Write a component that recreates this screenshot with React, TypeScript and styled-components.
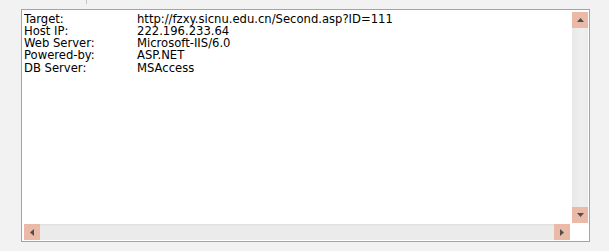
import React from "react";
import styled, { createGlobalStyle } from "styled-components";

const Global = createGlobalStyle`
  html, body { margin: 0; padding: 0; background: #f2f2f2; }
  #root { width: 609px; height: 251px; overflow: hidden; }
`;

const Page = styled.div`
  width: 609px;
  height: 251px;
  box-sizing: border-box;
  padding: 0 20px 0 21px;
  display: flex;
  flex-direction: column;
`;

const TabStrip = styled.div`
  height: 9px;
  display: flex;
  align-items: flex-start;
`;

const TabDivider = styled.div`
  margin-left: 65px;
  width: 1px;
  height: 4px;
  background: #c4c4c4;
`;

const Box = styled.div`
  width: 569px;
  height: 233px;
  box-sizing: border-box;
  border: 1px solid #a3a3a3;
  background: #ffffff;
  padding: 2px 1px 1px 2px;
  display: grid;
  grid-template-columns: 1fr 16px;
  grid-template-rows: 1fr 17px;
`;

const Content = styled.div`
  padding-top: 0.5px;
  display: grid;
  grid-template-columns: 113px auto;
  align-content: start;
  font-family: "DejaVu Sans", Verdana, sans-serif;
  font-size: 11.6px;
  line-height: 12.25px;
  color: #000;
  overflow: hidden;
`;

const Cell = styled.div`
  white-space: nowrap;
`;

const VScroll = styled.div`
  display: flex;
  flex-direction: column;
  background: linear-gradient(to right, #e8e8e8, #efefef 60%, #ebebeb);
  height: 211px;
`;

const HScroll = styled.div`
  display: flex;
  background: linear-gradient(to bottom, #e2e2e2 0, #e2e2e2 1px, #ebebeb 2px);
  height: 16px;
  margin-top: 1px;
  width: 546px;
`;

const Track = styled.div`
  flex: 1;
`;

const Btn = styled.div<{ $w: number; $h: number }>`
  width: ${(p) => p.$w}px;
  height: ${(p) => p.$h}px;
  flex: none;
  background: #ebb9a7;
  display: flex;
  align-items: center;
  justify-content: center;
`;

const Corner = styled.div`
  background: #ffffff;
`;

type Dir = "up" | "down" | "left" | "right";

const Arrow: React.FC<{ dir: Dir }> = ({ dir }) => {
  const pts: Record<Dir, string> = {
    up: "0,4 7,4 3.5,0",
    down: "0,0 7,0 3.5,4",
    left: "4,0 4,7 0,3.5",
    right: "0,0 0,7 4,3.5",
  };
  const vertical = dir === "up" || dir === "down";
  const w = vertical ? 7 : 4;
  const h = vertical ? 4 : 7;
  return (
    <svg width={w} height={h} viewBox={`0 0 ${w} ${h}`}>
      <polygon points={pts[dir]} fill="#4f4f4f" />
    </svg>
  );
};

const rows: [string, string][] = [
  ["Target:", "http://fzxy.sicnu.edu.cn/Second.asp?ID=111"],
  ["Host IP:", "222.196.233.64"],
  ["Web Server:", "Microsoft-IIS/6.0"],
  ["Powered-by:", "ASP.NET"],
  ["DB Server:", "MSAccess"],
];

export default function App() {
  return (
    <>
      <Global />
      <Page>
        <TabStrip>
          <TabDivider />
        </TabStrip>
        <Box>
          <Content>
            {rows.map(([k, v]) => (
              <React.Fragment key={k}>
                <Cell>{k}</Cell>
                <Cell>{v}</Cell>
              </React.Fragment>
            ))}
          </Content>
          <VScroll>
            <Btn $w={16} $h={16}>
              <Arrow dir="up" />
            </Btn>
            <Track />
            <Btn $w={16} $h={16}>
              <Arrow dir="down" />
            </Btn>
          </VScroll>
          <HScroll>
            <Btn $w={16} $h={16}>
              <Arrow dir="left" />
            </Btn>
            <Track />
            <Btn $w={16} $h={16}>
              <Arrow dir="right" />
            </Btn>
          </HScroll>
          <Corner />
        </Box>
      </Page>
    </>
  );
}
